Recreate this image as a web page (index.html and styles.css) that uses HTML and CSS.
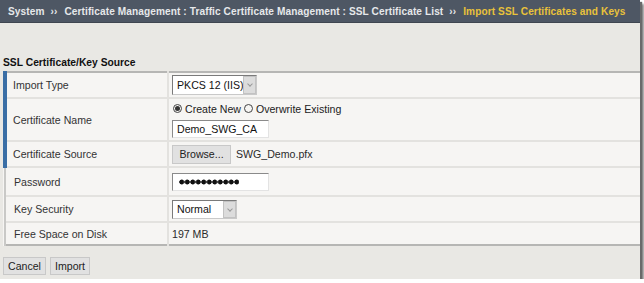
FILE: index.html
```html
<!DOCTYPE html>
<html lang="en">
<head>
    <meta charset="UTF-8">
    <title>Import SSL Certificates and Keys</title>
    <link rel="stylesheet" href="styles.css">
</head>
<body>
    <div class="window">
        <div class="breadcrumb">
            <span>System</span><span class="sep">&rsaquo;&rsaquo;</span><span>Certificate Management : Traffic Certificate Management : SSL Certificate List</span><span class="sep">&rsaquo;&rsaquo;</span><span class="current">Import SSL Certificates and Keys</span>
        </div>
        <main class="content">
            <h2 class="section-title">SSL Certificate/Key Source</h2>
            <table class="props">
                <tr class="row-import required">
                    <td class="label">Import Type</td>
                    <td class="value">
                        <span class="select select-type">PKCS 12 (IIS)<span class="arrow"></span></span>
                    </td>
                </tr>
                <tr class="row-name required">
                    <td class="label">Certificate Name</td>
                    <td class="value">
                        <div class="radios">
                            <span class="radio checked"></span><span>Create New</span><span class="radio second"></span><span>Overwrite Existing</span>
                        </div>
                        <span class="text-input">Demo_SWG_CA</span>
                    </td>
                </tr>
                <tr class="row-source required">
                    <td class="label">Certificate Source</td>
                    <td class="value">
                        <span class="button browse">Browse...</span><span class="file-name">SWG_Demo.pfx</span>
                    </td>
                </tr>
                <tr class="row-password">
                    <td class="label">Password</td>
                    <td class="value">
                        <span class="text-input"><span class="dots"></span></span>
                    </td>
                </tr>
                <tr class="row-key">
                    <td class="label">Key Security</td>
                    <td class="value">
                        <span class="select select-key">Normal<span class="arrow"></span></span>
                    </td>
                </tr>
                <tr class="row-disk">
                    <td class="label">Free Space on Disk</td>
                    <td class="value">197 MB</td>
                </tr>
            </table>
            <div class="actions">
                <span class="button">Cancel</span>
                <span class="button">Import</span>
            </div>
        </main>
    </div>
</body>
</html>
```

FILE: styles.css
```css
body {
    margin: 0;
    background-color: #ffffff;
    font-family: 'Liberation Sans', Arial, sans-serif;
    font-size: 10.6px;
    color: #2b2b2b;
}

.window {
    width: 640px;
    height: 279px;
    background-color: #e9e8e4;
    box-shadow: 2px 2px 1px #6a6a6a, 4px 4px 2px #8a8a8a;
    overflow: hidden;
}

.breadcrumb {
    height: 23px;
    box-sizing: border-box;
    padding: 6px 0 0 8px;
    background-color: #4e5764;
    border-bottom: 1px solid #3f4650;
    color: #e6e8ea;
    font-weight: bold;
    font-size: 10.1px;
    white-space: nowrap;
    letter-spacing: 0.1px;
}

.breadcrumb .sep {
    margin: 0 7px 0 6px;
    font-size: 10px;
}

.breadcrumb .current {
    color: #e9c23a;
}

.content {
    padding: 33px 0 0 3px;
}

.section-title {
    margin: 0 0 1px 0;
    font-size: 10.3px;
    font-weight: bold;
    color: #111;
    line-height: 14px;
}

.props {
    width: 637px;
    border-collapse: collapse;
    border-top: 2px solid #b6b6b4;
    border-bottom: 2px solid #b6b6b4;
    background-color: #f6f5f3;
}

.props td {
    padding: 0;
    border-top: 2px solid #e3e2df;
    vertical-align: middle;
}

.props tr:first-child td {
    border-top: none;
}

.props .label {
    box-sizing: border-box;
    width: 163px;
    padding-left: 8px;
    border-left: 2px solid #c9c9c7;
    border-right: 2px solid #e3e2df;
    color: #333;
}

.props .required .label {
    border-left: 4px solid #3a6ea5;
    padding-left: 6px;
}

.props .value {
    padding-left: 3px;
}

.row-import td { height: 24px; }
.row-name td { height: 41px; }
.row-source td { height: 24px; }
.row-password td { height: 27px; }
.row-key td { height: 24px; }
.row-disk td { height: 21px; }

.select {
    display: inline-flex;
    align-items: center;
    height: 20px;
    box-sizing: border-box;
    padding-left: 4px;
    background-color: #fff;
    border: 1px solid #c9c9c9;
    border-top-color: #7a7a7a;
    border-left-color: #7a7a7a;
    color: #111;
    position: relative;
}

.select-type {
    width: 85px;
}

.select-key {
    width: 65px;
    height: 19px;
}

.select .arrow {
    position: absolute;
    right: 0;
    top: 0;
    bottom: 0;
    width: 13px;
    background-color: #dcdcdc;
    border: 1px solid #c2c2c2;
    box-sizing: border-box;
}

.select .arrow::after {
    content: "";
    position: absolute;
    left: 4px;
    top: 5px;
    width: 3px;
    height: 3px;
    border-right: 1px solid #999;
    border-bottom: 1px solid #999;
    transform: rotate(45deg);
}

.radios {
    display: flex;
    align-items: center;
    height: 14px;
    margin-bottom: 4px;
    color: #222;
}

.radio {
    display: inline-block;
    width: 9px;
    height: 9px;
    box-sizing: border-box;
    border: 1px solid #444;
    border-radius: 50%;
    margin: 0 3px 0 1px;
    position: relative;
}

.radio.second {
    margin-left: 3px;
}

.radio.checked::after {
    content: "";
    position: absolute;
    left: 1px;
    top: 1px;
    width: 5px;
    height: 5px;
    border-radius: 50%;
    background-color: #333;
}

.text-input {
    display: inline-flex;
    align-items: center;
    width: 97px;
    height: 18px;
    box-sizing: border-box;
    padding-left: 4px;
    background-color: #fff;
    border: 1px solid #e3e3e3;
    border-top-color: #8a8a8a;
    border-left-color: #8a8a8a;
    color: #111;
}

.dots {
    display: block;
    width: 60px;
    height: 6px;
    margin-left: 2px;
    background: radial-gradient(circle, #111 2.2px, transparent 2.8px) repeat-x;
    background-size: 5.5px 6px;
}

.button {
    display: inline-flex;
    align-items: center;
    height: 19px;
    box-sizing: border-box;
    padding: 0 5px;
    background-color: #e1e1e1;
    border: 1px solid #c8c8c8;
    color: #222;
}

.browse {
    width: 59px;
    justify-content: center;
}

.file-name {
    margin-left: 5px;
}

.actions {
    display: flex;
    gap: 4px;
    margin-top: 11px;
}

.actions .button {
    height: 18px;
    padding: 0 4px;
}
```
